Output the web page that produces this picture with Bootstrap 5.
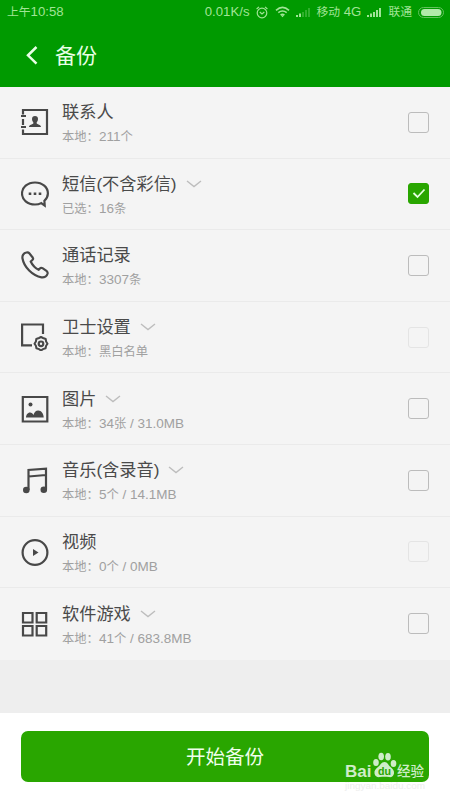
<!DOCTYPE html>
<html lang="zh-CN">
<head>
<meta charset="utf-8">
<meta name="viewport" content="width=device-width, initial-scale=1">
<title>备份</title>
<link href="https://cdn.jsdelivr.net/npm/bootstrap@5.3.0/dist/css/bootstrap.min.css" rel="stylesheet">
<style>
body{font-family:"Liberation Sans","Noto Sans CJK SC",sans-serif;background:#eee;height:800px;overflow:hidden}
.app-head{background:#009a00;height:87px;color:#e9ffe6}
.status{height:24px;font-size:13.2px;line-height:24px;color:#a0e496;padding:0 6px 0 7px}
.status svg,.entry svg{display:block;flex:none}
.status .cjk{font-size:11.8px}
.gap-a{margin-left:7px}
.gap-b{margin-left:6px}
.bar-title{height:63px;padding-left:26px}
.bar-title h1{font-size:21px;line-height:30px;font-weight:400;margin:0 0 0 17px}
.entries{height:572.5px;background:#f4f4f4}
.entry{height:71.6px;padding:0 21px;border-bottom:1px solid #eaeaea}
.entry:last-child{border-bottom:0}
.entry-title{font-size:17.2px;line-height:24px;color:#4a4a4a;white-space:nowrap}
.entry-note{font-size:12.3px;line-height:26px;color:#a0a0a0;white-space:nowrap}
.entry-note b{font-weight:400;font-size:13.5px}
.entry-text{margin-left:13px;padding-top:6px}
.entry-icon{width:28px;height:28px;fill:none;stroke:#484848;stroke-width:2.2}
.entry-icon .solid{fill:#484848;stroke:none}
.chev{width:16px;height:8px;margin-left:9px;fill:none;stroke:#bdbdbd;stroke-width:1.4}
.tick{width:21px;height:21px;border:1.5px solid #bcbcbc;border-radius:3px}
.tick.off{border-color:#e4e4e4}
.tick.on{background:#29a600;border-color:#29a600}
.foot{height:87px;padding:18px 21px 0}
.start,.start:hover{height:51px;border-radius:7px;background:#29a600;color:#f0ffec;font-size:19.5px;line-height:53px;padding:0;border:0}
.watermark{left:344px;top:750px;width:90px;height:43px;color:#cfedc8}
</style>
<script src="https://cdn.jsdelivr.net/npm/bootstrap@5.3.0/dist/js/bootstrap.bundle.min.js"></script>
</head>
<body class="d-flex flex-column position-relative">
<header class="app-head">
  <div class="status d-flex align-items-center">
    <span><span class="cjk">上午</span>10:58</span>
    <span class="ms-auto">0.01K/s</span>
    <svg class="gap-b" width="12" height="13" viewBox="0 0 12 13" fill="none" stroke="currentColor" stroke-width="1.2"><circle cx="6" cy="7" r="4.800"/><path d="M.6 3 3 .9M11.400 3 9 .9M3.800 6 6 8l2.300-2"/></svg>
    <svg class="gap-a" width="15" height="12" viewBox="0 0 15 12" fill="none" stroke="currentColor" stroke-width="1.6"><path d="M1 4.300Q7.500-1.400 14 4.300M3.300 6.700q4.200-3.400 8.400 0M5.600 9q1.900-1.500 3.800 0"/><path d="m5.700 9.200 1.800 2 1.800-2z" fill="currentColor" stroke="none"/></svg>
    <svg class="gap-b" width="15" height="10" viewBox="0 0 15 10" fill="currentColor"><path d="M0 8h2v2H0zM3 6.500h2V10H3z"/><path opacity=".3" d="M6 5h2v5H6zM9 3h2v7H9zM12 1h2v9h-2z"/></svg>
    <span class="gap-b"><span class="cjk">移动</span> 4G</span>
    <svg class="gap-b" width="15" height="10" viewBox="0 0 15 10" fill="currentColor"><path d="M0 8h2v2H0zM3 6.500h2V10H3zM6 5h2v5H6zM9 3h2v7H9zM12 1h2v9h-2z"/></svg>
    <span class="cjk gap-b">联通</span>
    <svg class="gap-b" width="26" height="11" viewBox="0 0 26 11"><rect x=".5" y=".5" width="25" height="10" rx="5" fill="none" stroke="#62c15c"/><rect x="3" y="2" width="20.500" height="7" rx="3.500" fill="#b1eaa9"/></svg>
  </div>
  <div class="bar-title d-flex align-items-center">
    <svg width="12" height="20" viewBox="0 0 12 20" fill="none" stroke="currentColor" stroke-width="2.500"><path d="M10.500 1 2 9.300l8.500 8.300"/></svg>
    <h1>备份</h1>
  </div>
</header>

<main class="entries">
  <div class="entry d-flex align-items-center">
    <svg class="entry-icon" viewBox="0 0 28 28"><path d="M2 6.500V2h24v24H2v-4.500M2 17V11M0 8h5M0 19h5"/><path class="solid" d="M14 8c-2 0-3 1.300-3 3 0 2 1 2.700 1.500 4-.4 1.800-4.500 1.300-4.500 4h12c0-2.700-4.100-2.200-4.500-4 .5-1.300 1.500-2 1.500-4 0-1.700-1-3-3-3z"/></svg>
    <div class="entry-text"><div class="entry-title">联系人</div><div class="entry-note">本地：<b>211</b>个</div></div>
    <div class="tick ms-auto"></div>
  </div>
  <div class="entry d-flex align-items-center">
    <svg class="entry-icon" viewBox="0 0 28 28"><path d="M14 2.500C6.500 2.500 1 7.300 1 13.500s5.500 11 13 11c2.500 0 4.500-.5 6.200-1.400l3.500 2.500-.3-4.900c2-1.900 3.500-4.400 3.500-7.200C26.900 7.300 21.500 2.500 14 2.500z"/><path class="solid" d="M7.700 12.500h2.600v2.600H7.700zM12.700 12.500h2.600v2.600h-2.600zM17.700 12.500h2.600v2.600h-2.600z"/></svg>
    <div class="entry-text"><div class="entry-title d-flex align-items-center">短信(不含彩信)<svg class="chev" viewBox="0 0 16 8"><path d="m1 1 7 5.500L15 1"/></svg></div><div class="entry-note">已选：<b>16</b>条</div></div>
    <div class="tick on ms-auto d-flex align-items-center justify-content-center"><svg width="14" height="11" viewBox="0 0 14 11" fill="none" stroke="#e5ffdf" stroke-width="1.800"><path d="m1.500 5 4 4 7-7.500"/></svg></div>
  </div>
  <div class="entry d-flex align-items-center">
    <svg class="entry-icon" viewBox="0 0 28 28"><path stroke-linejoin="round" d="M5.500 1.500C2.500 2 1 4.500 1.500 7.500 3 16 11.500 25 20.500 26.300c3 .4 5.500-1.300 6.100-3.800.2-1-.1-1.600-.8-2.300l-4.300-3c-.9-.6-1.900-.5-2.600.3l-1.200 1.400c-3-1.600-6.500-5.200-8-8.400l1.700-1.500c.8-.7.9-1.600.3-2.500L8.300 2.300c-.7-.9-1.600-1-2.800-.8z"/></svg>
    <div class="entry-text"><div class="entry-title">通话记录</div><div class="entry-note">本地：<b>3307</b>条</div></div>
    <div class="tick ms-auto"></div>
  </div>
  <div class="entry d-flex align-items-center">
    <svg class="entry-icon" viewBox="0 0 28 28"><path d="M11 22.300H1.100V1.500H22v9.500"/><path stroke-linejoin="round" stroke-width="2" d="m18 15 2-1 2 1 2.700 1 .4 2.500 1.400 2.200-1.400 2.100-.5 2.500-2.600.8-2 1.400-2-1.400-2.600-.8-.5-2.500-1.400-2.100 1.400-2.200.4-2.500z"/><circle cx="20" cy="20.800" r="2.300"/></svg>
    <div class="entry-text"><div class="entry-title d-flex align-items-center">卫士设置<svg class="chev" viewBox="0 0 16 8"><path d="m1 1 7 5.500L15 1"/></svg></div><div class="entry-note">本地：黑白名单</div></div>
    <div class="tick off ms-auto"></div>
  </div>
  <div class="entry d-flex align-items-center">
    <svg class="entry-icon" viewBox="0 0 28 28"><path d="M1.800 2h24.500v24.500H1.800z"/><circle class="solid" cx="9.500" cy="9.500" r="2"/><path class="solid" d="M5 22.500c0-2.500 1.700-5 4-5 1.700 0 2.800 1.200 3.500 2.400.6-2.400 2.300-4.400 4.700-4.400 3.300 0 5.500 3.600 5.500 7z"/></svg>
    <div class="entry-text"><div class="entry-title d-flex align-items-center">图片<svg class="chev" viewBox="0 0 16 8"><path d="m1 1 7 5.500L15 1"/></svg></div><div class="entry-note">本地：<b>34</b>张<b> / 31.0MB</b></div></div>
    <div class="tick ms-auto"></div>
  </div>
  <div class="entry d-flex align-items-center">
    <svg class="entry-icon" viewBox="0 0 28 28"><path d="M7.500 24V4L25 2.600V23M7.500 10.500 25 9"/><circle class="solid" cx="5.300" cy="24" r="3.300"/><circle class="solid" cx="22.800" cy="23.800" r="3.300"/></svg>
    <div class="entry-text"><div class="entry-title d-flex align-items-center">音乐(含录音)<svg class="chev" viewBox="0 0 16 8"><path d="m1 1 7 5.500L15 1"/></svg></div><div class="entry-note">本地：<b>5</b>个<b> / 14.1MB</b></div></div>
    <div class="tick ms-auto"></div>
  </div>
  <div class="entry d-flex align-items-center">
    <svg class="entry-icon" viewBox="0 0 28 28"><circle cx="14" cy="14.500" r="12.400"/><path class="solid" d="M12 11v7l5.500-3.500z"/></svg>
    <div class="entry-text"><div class="entry-title">视频</div><div class="entry-note">本地：<b>0</b>个<b> / 0MB</b></div></div>
    <div class="tick off ms-auto"></div>
  </div>
  <div class="entry d-flex align-items-center">
    <svg class="entry-icon" viewBox="0 0 28 28"><path d="M2 3h9.500v9.500H2zM15.700 3h9.500v9.500h-9.500zM2 16h9.500v9.500H2zM15.700 16h9.500v9.500h-9.500z"/></svg>
    <div class="entry-text"><div class="entry-title d-flex align-items-center">软件游戏<svg class="chev" viewBox="0 0 16 8"><path d="m1 1 7 5.500L15 1"/></svg></div><div class="entry-note">本地：<b>41</b>个<b> / 683.8MB</b></div></div>
    <div class="tick ms-auto"></div>
  </div>
</main>

<footer class="foot bg-white mt-auto"><button type="button" class="start btn w-100 d-block">开始备份</button></footer>

<svg class="watermark position-absolute" viewBox="0 0 90 43" fill="currentColor">
  <text x="1" y="26.500" font-size="17" font-weight="700" textLength="26.500" lengthAdjust="spacingAndGlyphs">Bai</text>
  <ellipse cx="32" cy="12.500" rx="2.800" ry="3.500"/><ellipse cx="37.200" cy="6.500" rx="2.800" ry="3.800"/><ellipse cx="44" cy="6.700" rx="2.800" ry="3.800"/><ellipse cx="49.500" cy="13.500" rx="2.800" ry="3.500"/>
  <path d="M40.500 12c-3 0-4 3-6.500 5s-4 3.700-3.500 6.500c.5 3 3 4 5.500 3.600 3-.5 6-.5 9 0 2.500.4 4.500-.8 5-3.600.4-2.800-1.200-4.500-3.500-6.500s-3-5-6-5z"/>
  <text x="34" y="25" font-size="11" font-weight="700" fill="#29a600" textLength="13" lengthAdjust="spacingAndGlyphs">du</text>
  <text x="53" y="26" font-size="13.500" font-weight="500">经验</text>
  <text x="1" y="38.500" font-size="8.500" fill="#ededed" textLength="80" lengthAdjust="spacingAndGlyphs">jingyan.baidu.com</text>
</svg>
</body>
</html>
